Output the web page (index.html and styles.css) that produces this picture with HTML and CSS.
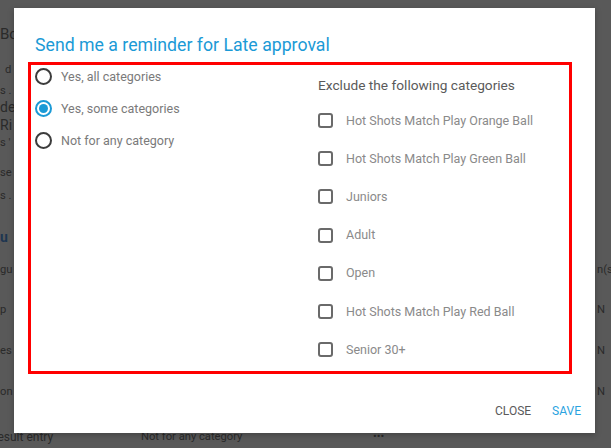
FILE: index.html
```html
<!DOCTYPE html>
<html>
<head>
    <meta charset="utf-8" />
    <title>Late approval reminder</title>
    <link rel="stylesheet" href="styles.css">
</head>
<body>
    <!-- page behind the dialog (seen through the overlay) -->
    <div class="page">
        <div class="bg-row bg-head"><span>Bo</span></div>
        <div class="bg-row"><span class="indent">d</span></div>
        <div class="bg-row"><span>s .</span></div>
        <div class="bg-row bg-big"><span>de</span></div>
        <div class="bg-row bg-big"><span>Ri</span></div>
        <div class="bg-row"><span>s '</span></div>
        <div class="bg-row"><span>se</span></div>
        <div class="bg-row"><span>s .</span></div>
        <div class="bg-row bg-section"><span>u</span></div>
        <div class="bg-row"><span>gu</span><span></span><span></span><span>n(s</span></div>
        <div class="bg-row"><span>p</span><span></span><span></span><span>N</span></div>
        <div class="bg-row"><span>es</span><span></span><span></span><span>N</span></div>
        <div class="bg-row"><span>on</span><span></span><span></span><span>N</span></div>
        <div class="bg-row"><span class="cut">Result entry</span><span>Not for any category</span><span>&bull;&bull;&bull;</span><span></span></div>
    </div>

    <div class="dialog">
        <h2 class="dialog-title">Send me a reminder for Late approval</h2>

        <div class="reminder-box">
            <div class="options">
                <label class="option"><span class="radio"></span>Yes, all categories</label>
                <label class="option"><span class="radio checked"></span>Yes, some categories</label>
                <label class="option"><span class="radio"></span>Not for any category</label>
            </div>

            <div class="exclude">
                <div class="exclude-title">Exclude the following categories</div>
                <label class="check-row"><span class="checkbox"></span>Hot Shots Match Play Orange Ball</label>
                <label class="check-row"><span class="checkbox"></span>Hot Shots Match Play Green Ball</label>
                <label class="check-row"><span class="checkbox"></span>Juniors</label>
                <label class="check-row"><span class="checkbox"></span>Adult</label>
                <label class="check-row"><span class="checkbox"></span>Open</label>
                <label class="check-row"><span class="checkbox"></span>Hot Shots Match Play Red Ball</label>
                <label class="check-row"><span class="checkbox"></span>Senior 30+</label>
            </div>
        </div>

        <div class="actions">
            <button class="btn">CLOSE</button>
            <button class="btn btn-primary">SAVE</button>
        </div>
    </div>
</body>
</html>
```

FILE: styles.css
```css
*
{
    box-sizing: border-box;
}

html,
body
{
    margin: 0;
    padding: 0;
    height: 100%;
    overflow: hidden;
}

body
{
    background: #595959;
    font: 11.2px/20px Roboto, "Liberation Sans", Arial, sans-serif;
    color: #2a2a2a;
}

/* page behind the overlay */
.page
{
    display: grid;
    grid-template-rows: 36px 21px 16px 18px 18px 30px 23px 41px 33px 40px 41px 41px 45px 20px;
    padding-top: 24px;
    height: 100%;
}

    .page .bg-row
    {
        display: grid;
        grid-template-columns: 141px 232px 224px 1fr;
        line-height: 20px;
        white-space: nowrap;
    }

    .page .bg-head
    {
        font-size: 15px;
    }

    .page .bg-big
    {
        font-size: 14px;
    }

    .page .bg-section
    {
        font-weight: 700;
        font-size: 14px;
        color: #1d3550;
    }

    .page .indent
    {
        padding-left: 5px;
    }

    .page .cut
    {
        margin-left: -10px;
        font-size: 12px;
    }

/* dialog */
.dialog
{
    position: absolute;
    top: 8px;
    left: 14px;
    width: 581px;
    height: 425px;
    background: #fff;
    padding: 27px 23px 0 14px;
    box-shadow: 0 2px 6px rgba(0, 0, 0, 0.25);
}

    .dialog .dialog-title
    {
        margin: 0 0 7px 7px;
        font-size: 17.7px;
        line-height: 20px;
        font-weight: 400;
        color: #1b9ad6;
        white-space: nowrap;
    }

.reminder-box
{
    display: grid;
    grid-template-columns: 287px 1fr;
    height: 312px;
    border: 3px solid #f00;
}

    .reminder-box .options
    {
        display: flex;
        flex-direction: column;
        gap: 15px;
        padding: 3px 0 0 4px;
    }

    .reminder-box .option
    {
        display: flex;
        align-items: center;
        height: 17px;
        color: #7a7a7a;
        font-size: 12.5px;
        cursor: pointer;
    }

    .reminder-box .radio
    {
        width: 17px;
        height: 17px;
        margin-right: 9px;
        border: 2px solid #3c3c3c;
        border-radius: 50%;
        display: flex;
        align-items: center;
        justify-content: center;
    }

        .reminder-box .radio.checked
        {
            border-color: #1b9ad6;
        }

            .reminder-box .radio.checked::after
            {
                content: "";
                width: 9px;
                height: 9px;
                border-radius: 50%;
                background: #1b9ad6;
            }

    .reminder-box .exclude
    {
        padding-top: 12px;
    }

    .reminder-box .exclude-title
    {
        font-size: 13.7px;
        line-height: 16px;
        color: #5a5a5a;
        margin-bottom: 8.5px;
        white-space: nowrap;
    }

    .reminder-box .check-row
    {
        display: flex;
        align-items: center;
        height: 38.2px;
        font-size: 12.5px;
        color: #8a8a8a;
        cursor: pointer;
    }

    .reminder-box .checkbox
    {
        width: 15px;
        height: 15px;
        margin-right: 13px;
        border: 2px solid #6a6a6a;
        border-radius: 3px;
    }

.actions
{
    display: flex;
    justify-content: flex-end;
    gap: 21px;
    margin: 29px -9px 0 0;
}

    .actions .btn
    {
        padding: 0;
        border: 0;
        background: none;
        font: 12px/16px Roboto, "Liberation Sans", Arial, sans-serif;
        color: #5a5a5a;
        cursor: pointer;
    }

    .actions .btn-primary
    {
        color: #2aa3df;
    }
```
